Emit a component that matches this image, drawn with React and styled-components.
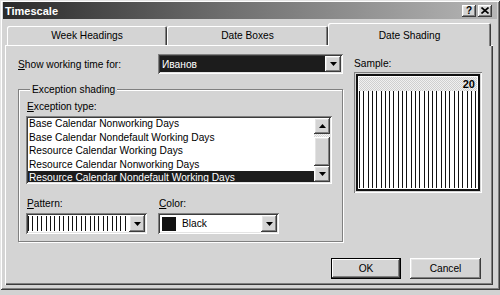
import React from 'react';
import styled, { createGlobalStyle } from 'styled-components';

const GlobalStyle = createGlobalStyle`
  html, body {
    margin: 0;
    padding: 0;
    background: #d2d2d2;
  }
  body {
    font-family: "Liberation Sans", Arial, sans-serif;
    font-size: 10.2px;
    color: #000;
  }
`;

const raised = `
  box-shadow:
    inset -1px -1px 0 #3c3c3c,
    inset 1px 1px 0 #ffffff,
    inset -2px -2px 0 #808080,
    inset 2px 2px 0 #e4e4e4;
`;

const sunken = `
  box-shadow:
    inset 1px 1px 0 #808080,
    inset -1px -1px 0 #ffffff,
    inset 2px 2px 0 #3c3c3c,
    inset -2px -2px 0 #e4e4e4;
`;

const Window = styled.div`
  width: 500px;
  height: 290px;
  box-sizing: border-box;
  padding: 2px 3px 3px 3px;
  background: #d4d4d4;
  display: flex;
  flex-direction: column;
  box-shadow:
    inset 1px 1px 0 #e4e4e4,
    inset -1px -1px 0 #3c3c3c,
    inset 2px 2px 0 #ffffff,
    inset -2px -2px 0 #808080;
`;

const TitleBar = styled.div`
  height: 17px;
  display: flex;
  align-items: center;
  padding: 0 2px 0 2px;
  background: linear-gradient(90deg, #2a2a2a 0%, #6e6e6e 45%, #b6b6b6 100%);
`;

const Title = styled.div`
  flex: 1;
  color: #fff;
  font-weight: bold;
  font-size: 11px;
`;

const CaptionButton = styled.div`
  width: 14px;
  height: 12px;
  margin-left: ${p => (p.$gap ? '2px' : '0')};
  margin-right: ${p => (p.$last ? '3px' : '0')};
  background: #d4d4d4;
  display: flex;
  align-items: center;
  justify-content: center;
  font-weight: bold;
  font-size: 10px;
  line-height: 1;
  ${raised}
`;

const Body = styled.div`
  flex: 1;
  display: flex;
  flex-direction: column;
  padding: 4px 4px 2px 2px;
`;

const TabStrip = styled.div`
  height: 22px;
  display: flex;
  align-items: flex-end;
  padding-left: 2px;
`;

const Tab = styled.div`
  position: relative;
  z-index: ${p => (p.$active ? 2 : 1)};
  width: ${p => p.$w}px;
  height: ${p => (p.$active ? 23 : 19)}px;
  margin-bottom: ${p => (p.$active ? '-1px' : '0')};
  box-sizing: border-box;
  display: flex;
  align-items: center;
  justify-content: center;
  padding-top: ${p => (p.$active ? '2px' : '0')};
  background: #d4d4d4;
  border-radius: 2px 2px 0 0;
  box-shadow:
    inset 1px 1px 0 #ffffff,
    inset -1px 0 0 #3c3c3c,
    inset -2px 0 0 #808080;
`;

const Panel = styled.div`
  flex: 1;
  display: flex;
  flex-direction: column;
  padding: 9px 11px 0 13px;
  background: #d4d4d4;
  box-shadow:
    inset 1px 1px 0 #ffffff,
    inset -1px -1px 0 #3c3c3c,
    inset -2px -2px 0 #808080;
`;

const MainGrid = styled.div`
  display: grid;
  grid-template-columns: 325px 128px;
  column-gap: 11px;
`;

const LeftColumn = styled.div`
  display: flex;
  flex-direction: column;
`;

const RightColumn = styled.div`
  display: flex;
  flex-direction: column;
  padding-top: 3px;
`;

const FieldRow = styled.div`
  height: 20px;
  display: flex;
  align-items: center;
  justify-content: space-between;
`;

const Label = styled.div`
  line-height: 13px;
  padding-left: ${p => p.$indent || 0}px;
  margin-top: ${p => p.$top || 0}px;
`;

const Combo = styled.div`
  width: ${p => p.$w}px;
  height: ${p => p.$h}px;
  box-sizing: border-box;
  padding: 2px;
  display: flex;
  background: #fff;
  ${sunken}
`;

const ComboField = styled.div`
  flex: 1;
  display: flex;
  align-items: center;
  gap: 6px;
  padding-left: ${p => p.$pad ?? 2}px;
  background: ${p => (p.$selected ? '#1c1c1c' : 'transparent')};
  color: ${p => (p.$selected ? '#fff' : '#000')};
`;

const Stripes = styled.div`
  flex: 1;
  margin: 1px 1px 1px 0;
  background: repeating-linear-gradient(90deg, #111 0 1px, #fff 1px 4.4px);
`;

const Swatch = styled.div`
  width: 14px;
  height: 14px;
  background: #111;
  margin-left: 2px;
`;

const DropButton = styled.div`
  width: 16px;
  align-self: stretch;
  display: flex;
  align-items: center;
  justify-content: center;
  background: #d4d4d4;
  ${raised}
`;

const GroupBox = styled.fieldset`
  margin: 9px 0 0 0;
  padding: 0 10px 7px 7px;
  min-width: 0;
  border: 1px solid #808080;
  box-shadow: inset 1px 1px 0 #fff, 1px 1px 0 #fff;
  display: flex;
  flex-direction: column;
`;

const GroupTitle = styled.legend`
  margin-left: 4px;
  padding: 0 2px;
  line-height: 13px;
  background: #d4d4d4;
`;

const ListBox = styled.div`
  margin-top: 3px;
  height: 68px;
  box-sizing: border-box;
  padding: 2px;
  display: flex;
  background: #fff;
  ${sunken}
`;

const ListViewport = styled.div`
  flex: 1;
  overflow: hidden;
`;

const ListRows = styled.div`
  margin-top: -1px;
`;

const ListRow = styled.div`
  height: 13.6px;
  line-height: 13.6px;
  padding-left: 1px;
  white-space: nowrap;
  background: ${p => (p.$selected ? '#1c1c1c' : 'transparent')};
  color: ${p => (p.$selected ? '#fff' : '#000')};
`;

const ScrollBar = styled.div`
  width: 16px;
  display: flex;
  flex-direction: column;
`;

const ScrollButton = styled.div`
  height: 16px;
  display: flex;
  align-items: center;
  justify-content: center;
  background: #d4d4d4;
  ${raised}
`;

const ScrollTrack = styled.div`
  height: 3px;
  background: repeating-conic-gradient(#f4f4f4 0 25%, #d4d4d4 0 50%) 0 0 / 2px 2px;
`;

const ScrollThumb = styled.div`
  flex: 1;
  background: #d4d4d4;
  ${raised}
`;

const PatternRow = styled.div`
  display: grid;
  grid-template-columns: 121px 121px;
  column-gap: 11px;
  margin-top: ${p => p.$top ?? 3}px;
`;

const SampleBox = styled.div`
  margin-top: 2px;
  height: 121px;
  box-sizing: border-box;
  padding: 2px;
  display: flex;
  background: #d4d4d4;
  box-shadow: inset 1px 1px 0 #808080, inset -1px -1px 0 #ffffff;
`;

const SampleFrame = styled.div`
  flex: 1;
  border: 2px solid #111;
  padding: 1px;
  display: flex;
  flex-direction: column;
  background: #fff;
`;

const SampleHeader = styled.div`
  height: 14px;
  display: flex;
  align-items: center;
  justify-content: flex-end;
  padding-right: 2px;
  font-weight: bold;
  font-size: 11px;
  background: repeating-conic-gradient(#f0f0f0 0 25%, #cfcfcf 0 50%) 0 0 / 2px 2px;
`;

const SampleStripes = styled.div`
  flex: 1;
  background: repeating-linear-gradient(90deg, #111 0 1px, #fff 1px 4.3px);
`;

const ButtonRow = styled.div`
  display: flex;
  justify-content: flex-end;
  gap: 9px;
  margin-top: 16px;
  padding-right: 1px;
`;

const DialogButton = styled.div`
  width: ${p => p.$w}px;
  height: 21px;
  box-sizing: border-box;
  display: flex;
  align-items: center;
  justify-content: center;
  background: #d4d4d4;
  ${p =>
    p.$default
      ? `box-shadow:
          inset 0 0 0 1px #000,
          inset -2px -2px 0 #3c3c3c,
          inset 2px 2px 0 #ffffff,
          inset -3px -3px 0 #808080;`
      : raised}
`;

const DownArrow = () => (
  <svg width="7" height="4" viewBox="0 0 7 4">
    <path d="M0 0h7L3.5 4z" fill="#000" />
  </svg>
);

const UpArrow = () => (
  <svg width="7" height="4" viewBox="0 0 7 4">
    <path d="M0 4h7L3.5 0z" fill="#000" />
  </svg>
);

const CloseGlyph = () => (
  <svg width="8" height="7" viewBox="0 0 8 7">
    <path d="M0.5 0.5L7.5 6.5M7.5 0.5L0.5 6.5" stroke="#000" strokeWidth="1.6" />
  </svg>
);

const exceptionTypes = [
  'Base Calendar Nonworking Days',
  'Base Calendar Nondefault Working Days',
  'Resource Calendar Working Days',
  'Resource Calendar Nonworking Days',
  'Resource Calendar Nondefault Working Days',
];

const tabs = [
  { label: 'Week Headings', width: 160 },
  { label: 'Date Boxes', width: 161 },
  { label: 'Date Shading', width: 163, active: true },
];

export default function App() {
  return (
    <>
      <GlobalStyle />
      <Window>
        <TitleBar>
          <Title>Timescale</Title>
          <CaptionButton>?</CaptionButton>
          <CaptionButton $gap $last>
            <CloseGlyph />
          </CaptionButton>
        </TitleBar>
        <Body>
          <TabStrip>
            {tabs.map(t => (
              <Tab key={t.label} $w={t.width} $active={t.active}>
                {t.label}
              </Tab>
            ))}
          </TabStrip>
          <Panel>
            <MainGrid>
              <LeftColumn>
                <FieldRow>
                  <Label>
                    <u>S</u>how working time for:
                  </Label>
                  <Combo $w={185} $h={20}>
                    <ComboField $selected>Иванов</ComboField>
                    <DropButton>
                      <DownArrow />
                    </DropButton>
                  </Combo>
                </FieldRow>
                <GroupBox>
                  <GroupTitle>Exception shading</GroupTitle>
                  <Label $indent={1} $top={4}>
                    <u>E</u>xception type:
                  </Label>
                  <ListBox>
                    <ListViewport>
                      <ListRows>
                        {exceptionTypes.map((item, i) => (
                          <ListRow key={item} $selected={i === exceptionTypes.length - 1}>
                            {item}
                          </ListRow>
                        ))}
                      </ListRows>
                    </ListViewport>
                    <ScrollBar>
                      <ScrollButton>
                        <UpArrow />
                      </ScrollButton>
                      <ScrollTrack />
                      <ScrollThumb />
                      <ScrollButton>
                        <DownArrow />
                      </ScrollButton>
                    </ScrollBar>
                  </ListBox>
                  <PatternRow $top={13}>
                    <Label $indent={1}>
                      <u>P</u>attern:
                    </Label>
                    <Label $indent={1}>
                      <u>C</u>olor:
                    </Label>
                  </PatternRow>
                  <PatternRow>
                    <Combo $w={121} $h={21}>
                      <Stripes />
                      <DropButton>
                        <DownArrow />
                      </DropButton>
                    </Combo>
                    <Combo $w={121} $h={21}>
                      <ComboField $pad={0}>
                        <Swatch />
                        Black
                      </ComboField>
                      <DropButton>
                        <DownArrow />
                      </DropButton>
                    </Combo>
                  </PatternRow>
                </GroupBox>
              </LeftColumn>
              <RightColumn>
                <Label>Sample:</Label>
                <SampleBox>
                  <SampleFrame>
                    <SampleHeader>20</SampleHeader>
                    <SampleStripes />
                  </SampleFrame>
                </SampleBox>
              </RightColumn>
            </MainGrid>
            <ButtonRow>
              <DialogButton $w={70} $default>
                OK
              </DialogButton>
              <DialogButton $w={71}>Cancel</DialogButton>
            </ButtonRow>
          </Panel>
        </Body>
      </Window>
    </>
  );
}
